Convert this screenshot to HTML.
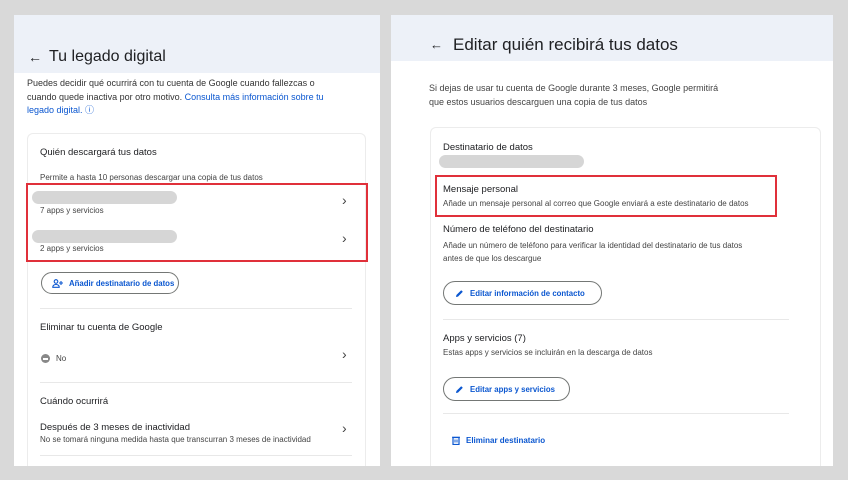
<!DOCTYPE html>
<html><head><meta charset="utf-8"><style>
*{margin:0;padding:0;box-sizing:border-box}
body{width:848px;height:480px;background:#d9d9d9;position:relative;overflow:hidden;font-family:"Liberation Sans",sans-serif;color:#202124}
.a{position:absolute;white-space:nowrap}
.p{position:absolute;background:#fff}
.hd{position:absolute;background:#edf1f8}
.pill{position:absolute;background:#d6d6d6;border-radius:7px}
.red{position:absolute;border:2px solid #e0303a}
.dv{position:absolute;height:1px;background:#e8e8e8}
.btn{position:absolute;border:1px solid #747775;border-radius:12px;color:#0b57d0;font-size:7.8px;font-weight:bold;white-space:nowrap;display:flex;align-items:center;gap:6px}
.chev{position:absolute;font-size:14px;color:#444}
.s{font-size:8px;color:#444}
.t{font-size:9.5px}
.l{color:#0b57d0}
</style></head><body>
<div class="p" style="left:14px;top:15px;width:366px;height:451px"></div>
<div class="hd" style="left:14px;top:15px;width:366px;height:58px"></div>
<div class="a" style="left:28px;top:49px;font-size:14px">←</div>
<div class="a" style="left:49px;top:48px;font-size:16px">Tu legado digital</div>
<div class="a" style="left:27px;top:77px;font-size:9px;line-height:13.5px;color:#333">Puedes decidir qué ocurrirá con tu cuenta de Google cuando fallezcas o<br>cuando quede inactiva por otro motivo. <span class="l">Consulta más información sobre tu<br>legado digital. ⓘ</span></div>
<div class="a" style="left:27px;top:133px;width:339px;height:333px;border:1px solid #ececec;border-bottom:none;border-radius:6px 6px 0 0"></div>
<div class="a t" style="left:40px;top:147px">Quién descargará tus datos</div>
<div class="a s" style="left:40px;top:173px">Permite a hasta 10 personas descargar una copia de tus datos</div>
<div class="red" style="left:26px;top:183px;width:342px;height:79px"></div>
<div class="pill" style="left:32px;top:191px;width:145px;height:13px"></div>
<div class="a s" style="left:40px;top:206px">7 apps y servicios</div>
<div class="chev" style="left:342px;top:192px">›</div>
<div class="pill" style="left:32px;top:230px;width:145px;height:13px"></div>
<div class="a s" style="left:40px;top:244px">2 apps y servicios</div>
<div class="chev" style="left:342px;top:230px">›</div>
<div class="btn" style="left:41px;top:272px;width:138px;height:22px;padding-left:10px"><svg width="11" height="9" viewBox="0 0 11 9"><circle cx="4" cy="2.5" r="1.8" fill="none" stroke="#0b57d0" stroke-width="1.1"/><path d="M0.8 8.3c0-2 1.5-2.8 3.2-2.8s3.2.8 3.2 2.8z" fill="none" stroke="#0b57d0" stroke-width="1.1"/><path d="M9 2v4M7 4h4" stroke="#0b57d0" stroke-width="1.1"/></svg>Añadir destinatario de datos</div>
<div class="dv" style="left:40px;top:308px;width:312px"></div>
<div class="a t" style="left:40px;top:322px">Eliminar tu cuenta de Google</div>
<div class="a" style="left:41px;top:354px;width:9px;height:9px;border-radius:50%;background:#888"></div>
<div class="a" style="left:43px;top:358px;width:5px;height:1.5px;background:#fff"></div>
<div class="a s" style="left:56px;top:354px">No</div>
<div class="chev" style="left:342px;top:346px">›</div>
<div class="dv" style="left:40px;top:382px;width:312px"></div>
<div class="a t" style="left:40px;top:396px">Cuándo ocurrirá</div>
<div class="a t" style="left:40px;top:422px">Después de 3 meses de inactividad</div>
<div class="a s" style="left:40px;top:435px">No se tomará ninguna medida hasta que transcurran 3 meses de inactividad</div>
<div class="chev" style="left:342px;top:420px">›</div>
<div class="dv" style="left:40px;top:455px;width:312px"></div>

<div class="p" style="left:391px;top:15px;width:442px;height:451px"></div>
<div class="hd" style="left:391px;top:15px;width:442px;height:46px"></div>
<div class="a" style="left:430px;top:37px;font-size:13px">←</div>
<div class="a" style="left:453px;top:35px;font-size:17px">Editar quién recibirá tus datos</div>
<div class="a" style="left:429px;top:82px;font-size:9px;line-height:13.5px;color:#444">Si dejas de usar tu cuenta de Google durante 3 meses, Google permitirá<br>que estos usuarios descarguen una copia de tus datos</div>
<div class="a" style="left:430px;top:127px;width:391px;height:339px;border:1px solid #ececec;border-bottom:none;border-radius:6px 6px 0 0"></div>
<div class="a t" style="left:443px;top:142px">Destinatario de datos</div>
<div class="pill" style="left:439px;top:155px;width:145px;height:13px"></div>
<div class="red" style="left:435px;top:175px;width:342px;height:42px"></div>
<div class="a t" style="left:443px;top:184px">Mensaje personal</div>
<div class="a s" style="left:443px;top:199px">Añade un mensaje personal al correo que Google enviará a este destinatario de datos</div>
<div class="a t" style="left:443px;top:224px">Número de teléfono del destinatario</div>
<div class="a s" style="left:443px;top:240px;line-height:12.5px">Añade un número de teléfono para verificar la identidad del destinatario de tus datos<br>antes de que los descargue</div>
<div class="btn" style="left:443px;top:281px;width:159px;height:24px;padding-left:11px"><svg width="9" height="9" viewBox="0 0 9 9"><path d="M1 8l.4-2L6.2 1.2l1.6 1.6L3 7.6z" fill="#0b57d0"/></svg>Editar información de contacto</div>
<div class="dv" style="left:443px;top:319px;width:346px"></div>
<div class="a t" style="left:443px;top:333px">Apps y servicios (7)</div>
<div class="a s" style="left:443px;top:348px">Estas apps y servicios se incluirán en la descarga de datos</div>
<div class="btn" style="left:443px;top:377px;width:127px;height:24px;padding-left:11px"><svg width="9" height="9" viewBox="0 0 9 9"><path d="M1 8l.4-2L6.2 1.2l1.6 1.6L3 7.6z" fill="#0b57d0"/></svg>Editar apps y servicios</div>
<div class="dv" style="left:443px;top:413px;width:346px"></div>
<svg class="a" style="left:452px;top:436px" width="8" height="9" viewBox="0 0 8 9"><rect x="1" y="1.5" width="6" height="7" fill="none" stroke="#0b57d0" stroke-width="1.2"/><path d="M0 1.2h8M3 3.5v3M5 3.5v3" stroke="#0b57d0" stroke-width="1"/></svg>
<div class="a l" style="left:466px;top:436px;font-size:8px;font-weight:bold">Eliminar destinatario</div>
</body></html>
